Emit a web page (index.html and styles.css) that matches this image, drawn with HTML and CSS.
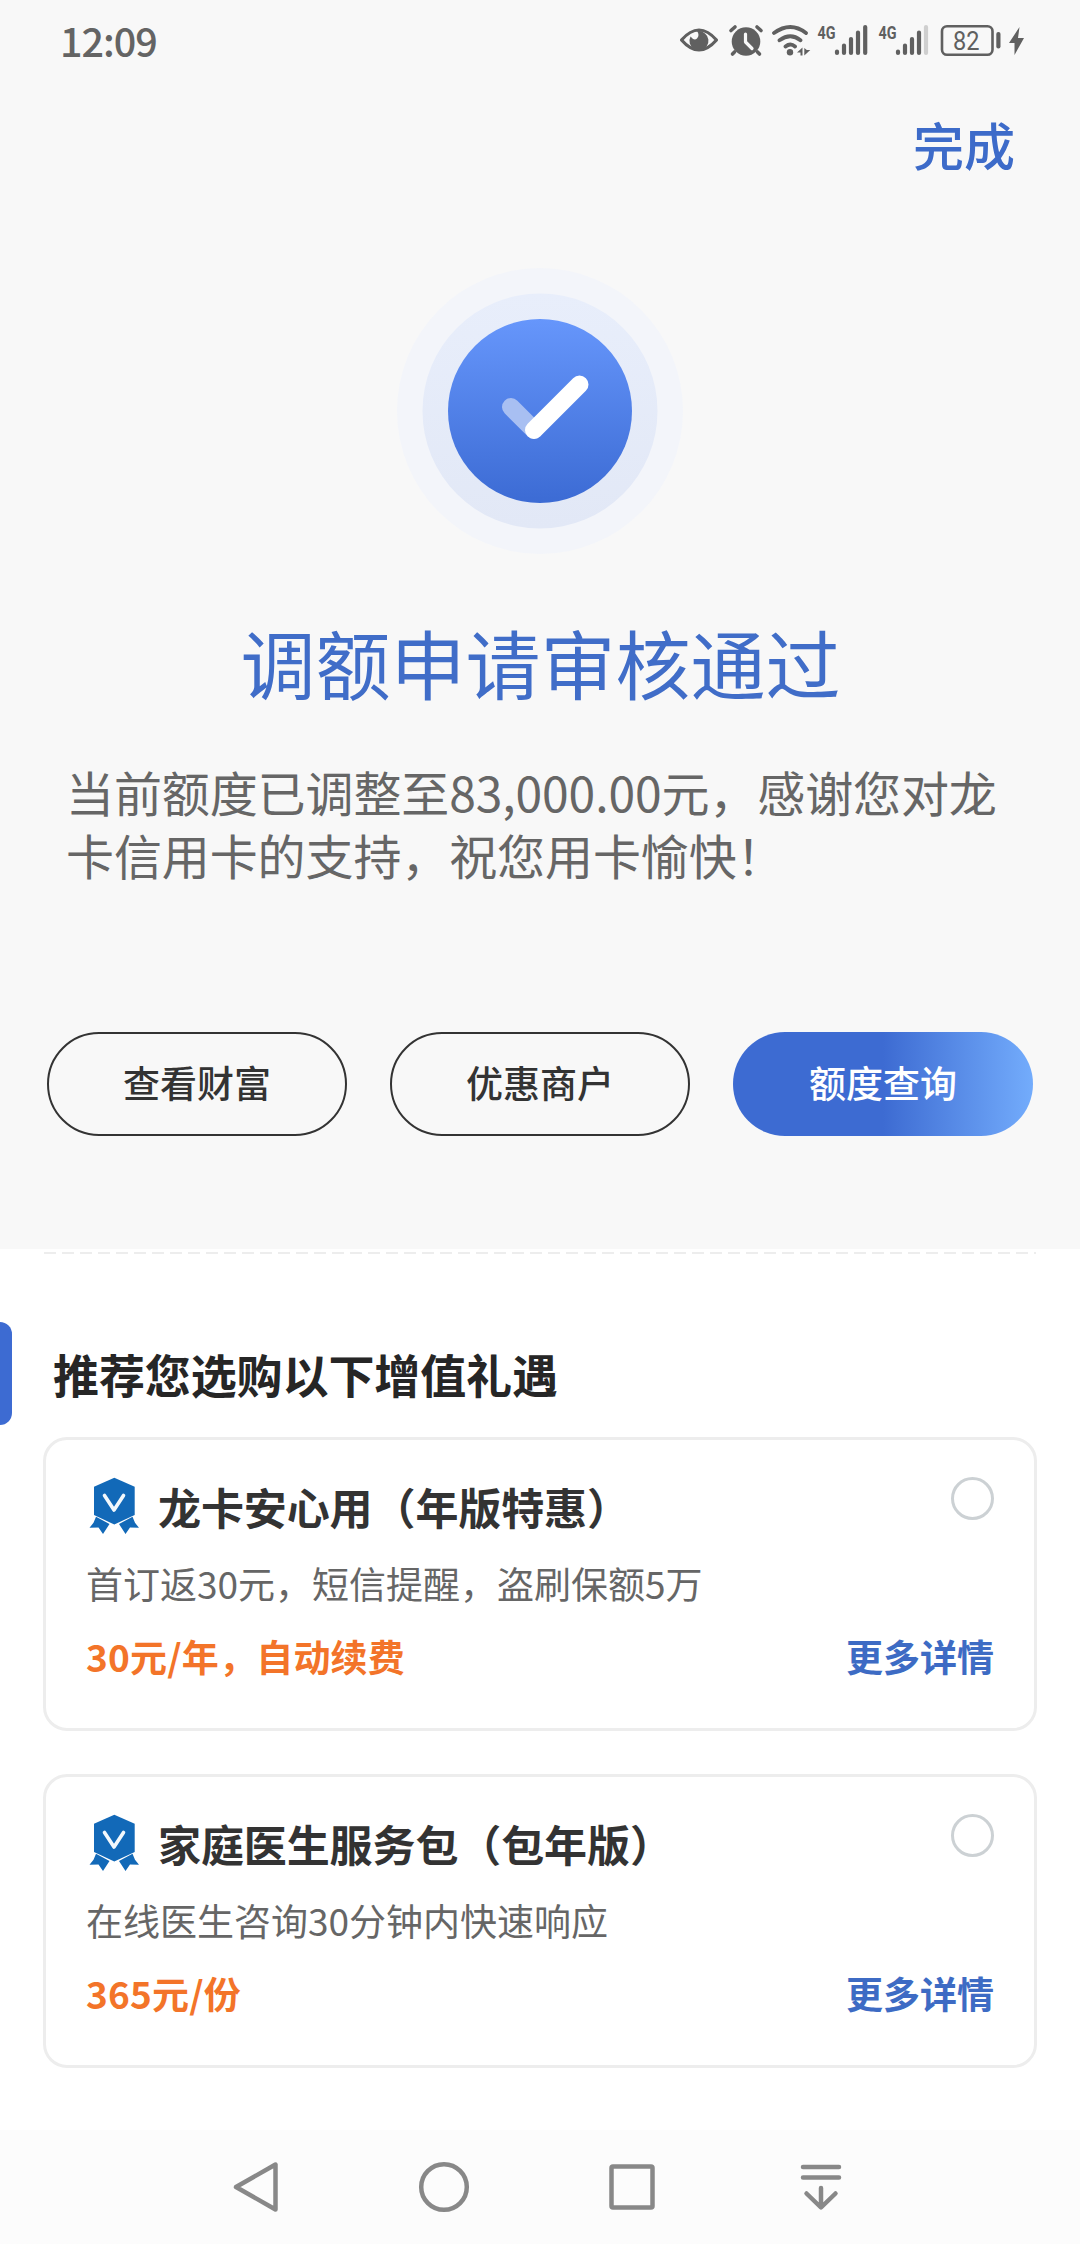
FILE: index.html
```html
<!DOCTYPE html>
<html lang="zh-CN">
<head>
<meta charset="utf-8">
<title>调额申请审核通过</title>
<link rel="stylesheet" href="styles.css">
</head>
<body>
<div class="screen">
  <section class="result">
    <header class="status">
      <span class="time">12:09</span>
      <svg class="indicators" width="350" height="40" viewBox="675 20 350 40">
        <g fill="none" stroke="#606060">
          <path d="M681.500 40q17.500-20 35 0q-17.500 20-35 0z" stroke-width="3.200" stroke-linejoin="round"/>
          <path d="M731 30.500l4-3.500M761 30.500l-4-3.500M734.500 52l-2 2M757.500 52l2 2" stroke-width="3.600" stroke-linecap="round"/>
          <path d="M774 33q16.500-12 32 0M779.500 40.300q11-8 21 0M785.500 46.500q5-4 9.500 0" stroke-width="3.800" stroke-linecap="round"/>
          <rect x="942" y="26.300" width="50.500" height="28.500" rx="5" stroke-width="2.600"/>
        </g>
        <g fill="#606060">
          <path d="M690.500 36.500a9.500 9.500 0 1 0 14.500-3a9 9 0 0 0-8-2.500q3 4 0 7.500q-3 2.500-6.500-2z"/>
          <circle cx="746" cy="41.500" r="14.300"/>
          <circle cx="790" cy="52.200" r="3.200"/>
          <path d="M802.500 47.500v8h-2v-3h-3.500zM804.300 48v7.500l6-5.500h-3.500z"/>
          <rect x="996.300" y="32" width="4.200" height="16.500" rx="2"/>
          <path d="M1019.500 27l-10.500 16h5.500v12l9.500-17h-6z"/>
        </g>
        <path d="M745.500 34v8l6.500 6.500" fill="none" stroke="#f8f8f8" stroke-width="3.200" stroke-linecap="round" stroke-linejoin="round"/>
        <g stroke="#606060" stroke-width="4.200" stroke-linecap="round">
          <path d="M837 51.500v1.500M844 45.500v7.500M851 39v14M858 32.500v20.500M865.200 27v26"/>
          <path d="M898 51.500v1.500M905 45.500v7.500M912 39v14M919 32.500v20.500"/>
          <path d="M926 27v26" stroke="#cfcfcf"/>
        </g>
        <g class="net">
          <text x="817.500" y="38.500" textLength="18" lengthAdjust="spacingAndGlyphs">4G</text>
          <text x="878.500" y="38.500" textLength="18" lengthAdjust="spacingAndGlyphs">4G</text>
        </g>
        <text class="level" x="953" y="49.700" textLength="26.500" lengthAdjust="spacingAndGlyphs">82</text>
      </svg>
    </header>
    <a class="done">完成</a>
    <svg class="badge" width="288" height="288" viewBox="0 0 288 288">
      <defs>
        <linearGradient id="disc" x1="0" y1="0" x2="0" y2="1"><stop offset="0" stop-color="#6696fb"/><stop offset="1" stop-color="#3c6bd4"/></linearGradient>
        <linearGradient id="ring" x1="0" y1="0" x2="0" y2="1"><stop offset="0" stop-color="#e8eefb"/><stop offset="1" stop-color="#e2e8f6"/></linearGradient>
      </defs>
      <circle cx="144" cy="144" r="143" fill="#f3f5fa"/>
      <circle cx="144" cy="144" r="117.500" fill="url(#ring)"/>
      <circle cx="144" cy="144" r="92" fill="url(#disc)"/>
      <g fill="none" stroke-width="18" stroke-linecap="round">
        <path d="M115 140l23 23" stroke="#a8bff2"/>
        <path d="M138 163l45.500-45.500" stroke="#fff"/>
      </g>
    </svg>
    <h1 class="title">调额申请审核通过</h1>
    <p class="message">当前额度已调整至83,000.00元，感谢您对龙卡信用卡的支持，祝您用卡愉快！</p>
    <div class="actions">
      <a class="button">查看财富</a>
      <a class="button">优惠商户</a>
      <a class="button button-primary">额度查询</a>
    </div>
  </section>
  <main class="offers">
    <div class="divider"></div>
    <h2 class="heading">推荐您选购以下增值礼遇</h2>
    <article class="card">
      <div class="card-head">
        <svg class="medal" width="52" height="58" viewBox="0 0 52 58">
          <path d="M26.300 .7l20.400 9v28.300l-20.400 9.500l-20.300-9.500v-28.300z" fill="#1269b8"/>
          <path d="M8 39.700l13.500 7.300l-6.500 10l-4.500-6.500l-9 .3l4-5zM44.500 39.700l-13.500 7.300l6.500 10l4.500-6.500l9 .3l-4-5z" fill="#1269b8"/>
          <path d="M16.500 18.500l9.500 14.500l9.500-14.500" fill="none" stroke="#f2f8fc" stroke-width="3.600" stroke-linecap="round" stroke-linejoin="round"/>
        </svg>
        <h3 class="name">龙卡安心用（年版特惠）</h3>
        <span class="radio"></span>
      </div>
      <p class="desc">首订返30元，短信提醒，盗刷保额5万</p>
      <div class="card-foot"><span class="price">30元/年，自动续费</span><a class="more">更多详情</a></div>
    </article>
    <article class="card">
      <div class="card-head">
        <svg class="medal" width="52" height="58" viewBox="0 0 52 58">
          <path d="M26.300 .7l20.400 9v28.300l-20.400 9.500l-20.300-9.500v-28.300z" fill="#1269b8"/>
          <path d="M8 39.700l13.500 7.300l-6.500 10l-4.500-6.500l-9 .3l4-5zM44.500 39.700l-13.500 7.300l6.500 10l4.500-6.500l9 .3l-4-5z" fill="#1269b8"/>
          <path d="M16.500 18.500l9.500 14.500l9.500-14.500" fill="none" stroke="#f2f8fc" stroke-width="3.600" stroke-linecap="round" stroke-linejoin="round"/>
        </svg>
        <h3 class="name">家庭医生服务包（包年版）</h3>
        <span class="radio"></span>
      </div>
      <p class="desc">在线医生咨询30分钟内快速响应</p>
      <div class="card-foot"><span class="price">365元/份</span><a class="more">更多详情</a></div>
    </article>
  </main>
  <nav class="navbar">
    <svg width="52" height="52" viewBox="0 0 52 52"><path d="M45.500 3.500v45L6 26z"/></svg>
    <svg width="52" height="52" viewBox="0 0 52 52"><circle cx="26" cy="26" r="22.800"/></svg>
    <svg width="52" height="52" viewBox="0 0 52 52"><rect x="5.500" y="5.500" width="41" height="41" rx="1.500"/></svg>
    <svg width="52" height="52" viewBox="0 0 52 52"><path d="M9 6h36M9 16.500h36M27 27v19M12.500 32.500l14.500 14l14.500-14"/></svg>
  </nav>
</div>
</body>
</html>
```
FILE: styles.css
```css
* { box-sizing: border-box; }
body {
  margin: 0;
  font-family: "Noto Sans CJK SC", sans-serif;
  color: #333;
  background: #fff;
}
h1, h2, h3, p { margin: 0; }
.screen {
  display: flex;
  flex-direction: column;
  width: 1080px;
  height: 2244px;
}
.result {
  display: flex;
  flex-direction: column;
  height: 1249px;
  background: #f8f8f8;
}
.status {
  display: flex;
  justify-content: space-between;
  align-items: center;
  height: 80px;
  padding: 0 55px 0 60px;
}
.time {
  font-size: 39.5px;
  font-weight: 500;
  line-height: 80px;
  letter-spacing: -1px;
  color: #646464;
}
.net {
  font: bold 19px "Roboto", sans-serif;
  fill: #606060;
}
.level {
  font: 25px "Roboto", sans-serif;
  fill: #606060;
}
.done {
  align-self: flex-end;
  margin: 24px 65px 0 0;
  font-size: 51px;
  font-weight: 500;
  line-height: 80px;
  color: #3d6bc9;
}
.badge {
  align-self: center;
  margin: 83px 0 0;
}
.title {
  margin-top: 47px;
  padding-left: 1px;
  text-align: center;
  font-size: 75px;
  font-weight: 400;
  line-height: 120px;
  color: #406dc8;
}
.message {
  margin: 38px 66px 0;
  font-size: 48px;
  line-height: 63px;
  letter-spacing: -0.1px;
  color: #666;
}
.actions {
  display: flex;
  justify-content: space-between;
  margin: 146px 47px 0;
}
.button {
  width: 300px;
  height: 104px;
  border: 2px solid #333;
  border-radius: 52px;
  text-align: center;
  font-size: 37px;
  font-weight: 500;
  line-height: 97px;
}
.button-primary {
  border: 0;
  line-height: 101px;
  color: #fff;
  background: linear-gradient(90deg, #3d6bd2 0%, #3d6bd2 50%, #73acfc 100%);
}
.offers {
  flex: 1;
  padding: 3px 43px 0;
}
.divider {
  height: 2px;
  margin: 0 1px;
  background: repeating-linear-gradient(90deg, #ededed 0 12px, transparent 12px 18px);
}
.heading {
  display: flex;
  align-items: center;
  gap: 41px;
  height: 103px;
  margin: 68px 0 0 -43px;
  font-size: 46px;
  font-weight: 700;
  line-height: 99px;
  letter-spacing: -0.1px;
  color: #262626;
}
.heading::before {
  content: "";
  width: 12px;
  height: 103px;
  border-radius: 0 12px 12px 0;
  background: #3d6bd2;
}
.card {
  height: 294px;
  margin-top: 43px;
  border: 3px solid #ededed;
  border-radius: 24px;
  padding: 36px 40px 0;
}
.heading + .card { margin-top: 12px; }
.card-head {
  display: flex;
  align-items: flex-start;
  height: 69px;
}
.medal { margin: 1px 18px 0 2px; }
.name {
  flex: 1;
  font-size: 43px;
  font-weight: 700;
  line-height: 60px;
  letter-spacing: -0.1px;
}
.radio {
  width: 43px;
  height: 43px;
  margin-top: 1px;
  border: 3px solid #ccd1d4;
  border-radius: 50%;
}
.desc {
  font-size: 37px;
  line-height: 76px;
  color: #666;
}
.card-foot {
  display: flex;
  justify-content: space-between;
  font-size: 37px;
  font-weight: 700;
  line-height: 70px;
}
.price {
  letter-spacing: 0.2px;
  color: #f37429;
}
.more { color: #3d6bc4; }
.navbar {
  display: flex;
  justify-content: center;
  gap: 136px;
  height: 114px;
  padding: 31px 4px 0 0;
  background: #fcfcfc;
}
.navbar svg {
  fill: none;
  stroke: #888;
  stroke-width: 4.500;
  stroke-linecap: round;
  stroke-linejoin: round;
}
```
